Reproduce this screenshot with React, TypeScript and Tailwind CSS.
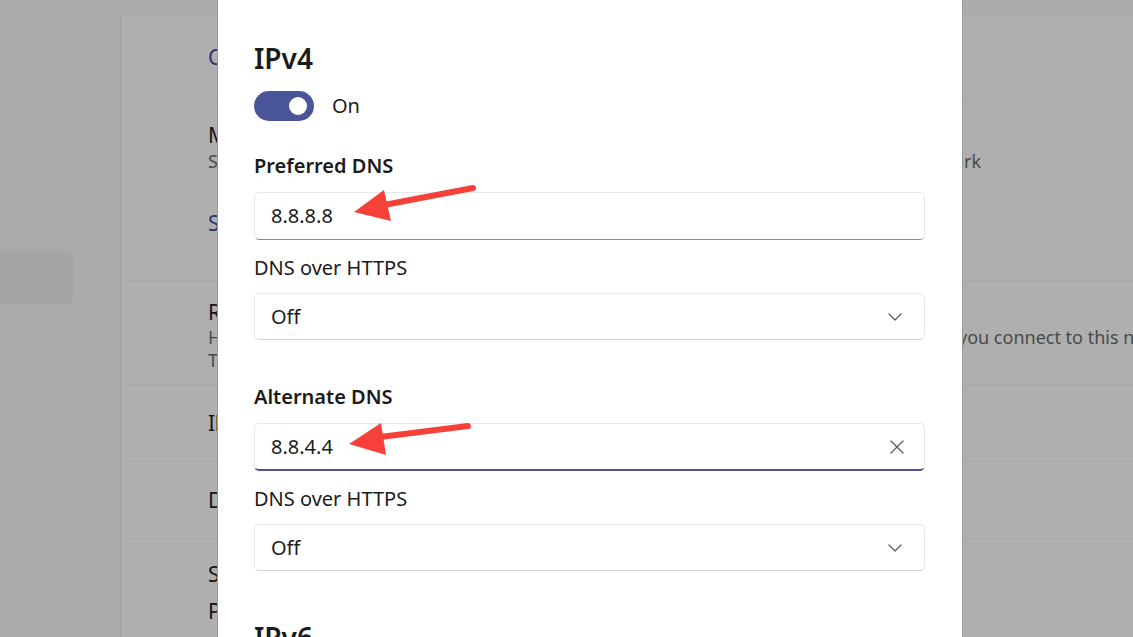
import React from "react";

const font = { fontFamily: '"Segoe UI", "Noto Sans", "Open Sans", sans-serif' };

function Chevron() {
  return (
    <svg width="14" height="8" viewBox="0 0 14 8" fill="none">
      <path d="M1 1 L7 7 L13 1" stroke="#5a5a5a" strokeWidth="1.3" strokeLinecap="round" strokeLinejoin="round" />
    </svg>
  );
}

function XIcon() {
  return (
    <svg width="14" height="14" viewBox="0 0 14 14" fill="none">
      <path d="M1 1 L13 13 M13 1 L1 13" stroke="#5a5a5a" strokeWidth="1.3" strokeLinecap="round" />
    </svg>
  );
}

function Select() {
  return (
    <div className="flex h-[47px] items-center justify-between rounded-[5px] border border-[#e8e8e8] border-b-[#cfcfcf] bg-white pl-4 pr-[22px]">
      <span className="text-[20px] text-[#1b1b1b]">Off</span>
      <Chevron />
    </div>
  );
}

export default function App() {
  return (
    <div className="relative h-[637px] w-[1133px] overflow-hidden bg-[#ababab]" style={font}>
      {/* Background settings window (dimmed) */}
      <div className="flex h-full">
        <div className="w-[120px] shrink-0 pt-[251px]">
          <div className="h-[54px] w-[73px] rounded-r-[6px] bg-[#a5a5a5]" />
        </div>
        <div className="mt-[15px] flex-1 border-l border-[#a0a0a0] bg-[#afafaf]">
          <div className="h-[88px] border-b border-[#a8a8a8] pl-[87px] pt-[27px]">
            <p className="text-[21px] text-[#2c3470]">Configure firewall and security settings</p>
          </div>
          <div className="h-[178px] border-b border-[#a8a8a8] pl-[87px] pt-[19px]">
            <p className="text-[21px] leading-[27px] text-[#151515]">Metered connection</p>
            <p className="flex w-[773px] justify-between overflow-hidden whitespace-nowrap text-[18px] leading-[24px] text-[#4a4a4a]">
              <span>Some apps might work differently</span>
              <span>when you're connected to this network</span>
            </p>
            <p className="mt-[35px] text-[21px] text-[#2c3470]">Set a data limit to help control data usage on this network</p>
          </div>
          <div className="h-[104px] border-b border-[#a8a8a8] pl-[87px] pt-[18px]">
            <p className="text-[21px] leading-[27px] text-[#151515]">Random hardware addresses</p>
            <p className="flex overflow-hidden whitespace-nowrap text-[18px] leading-[23px] text-[#4a4a4a]">
              <span className="w-[750px] shrink-0 overflow-hidden">Help protect your privacy by making it harder for people to track your device location when</span>
              <span>you connect to this network. The setting takes effect</span>
            </p>
            <p className="whitespace-nowrap text-[18px] leading-[23px] text-[#4a4a4a]">The setting takes effect the next time you connect to this network.</p>
          </div>
          <div className="h-[77px] border-b border-[#a8a8a8] pl-[87px] pt-[23px]">
            <p className="text-[21px] tracking-[-0.5px] text-[#151515]">IP assignment:</p>
          </div>
          <div className="h-[77px] border-b border-[#a8a8a8] pl-[87px] pt-[23px]">
            <p className="text-[21px] text-[#151515]">DNS server assignment:</p>
          </div>
          <div className="pl-[87px] pt-[17px]">
            <p className="text-[21px] leading-[37px] text-[#151515]">SSID:</p>
            <p className="text-[21px] leading-[37px] text-[#151515]">Protocol:</p>
            <p className="text-[21px] leading-[37px] text-[#151515]">Security type:</p>
          </div>
        </div>
      </div>

      {/* Dialog */}
      <div className="absolute left-[217px] top-0 h-[700px] w-[746px] border-x border-[#9a9a9a] bg-white pl-[36px] pr-[37px]">
        <h2 className="mt-[38px] text-[28px] font-semibold leading-[40px] text-[#1b1b1b]">IPv4</h2>
        <div className="mt-[13px] flex items-center gap-[18px]">
          <div className="flex h-[30px] w-[60px] items-center justify-end rounded-full bg-[#4a5499] pr-[7px]">
            <div className="h-[18px] w-[18px] rounded-full bg-white" />
          </div>
          <span className="text-[20px] text-[#1b1b1b]">On</span>
        </div>

        <p className="mt-[31px] text-[20px] font-semibold leading-[28px] text-[#1b1b1b]">Preferred DNS</p>
        <div className="mt-[12px] flex h-[48px] items-center rounded-[5px] border border-[#e8e8e8] border-b-[#8a8a8a] bg-white pl-4">
          <span className="text-[20px] text-[#1b1b1b]">8.8.8.8</span>
        </div>

        <p className="mt-[14px] text-[20px] leading-[28px] text-[#1b1b1b]">DNS over HTTPS</p>
        <div className="mt-[11px]">
          <Select />
        </div>

        <p className="mt-[43px] text-[20px] font-semibold leading-[28px] text-[#1b1b1b]">Alternate DNS</p>
        <div className="mt-[12px] flex h-[48px] items-center justify-between rounded-[5px] border border-[#e8e8e8] border-b-2 border-b-[#4a5499] bg-white pl-4 pr-[20px]">
          <span className="text-[20px] text-[#1b1b1b]">8.8.4.4</span>
          <XIcon />
        </div>

        <p className="mt-[14px] text-[20px] leading-[28px] text-[#1b1b1b]">DNS over HTTPS</p>
        <div className="mt-[11px]">
          <Select />
        </div>

        <h2 className="mt-[46px] text-[28px] font-semibold leading-[40px] text-[#1b1b1b]">IPv6</h2>
      </div>

      {/* Red annotation arrows */}
      <svg className="pointer-events-none absolute left-0 top-0" width="1133" height="637">
        <line x1="473" y1="188" x2="384" y2="205" stroke="#f5413a" strokeWidth="6" strokeLinecap="round" />
        <polygon points="354,212 384,190 391,221" fill="#f5413a" />
        <line x1="468" y1="426" x2="380" y2="437" stroke="#f5413a" strokeWidth="6" strokeLinecap="round" />
        <polygon points="349,444 381,423 386,455" fill="#f5413a" />
      </svg>
    </div>
  );
}
